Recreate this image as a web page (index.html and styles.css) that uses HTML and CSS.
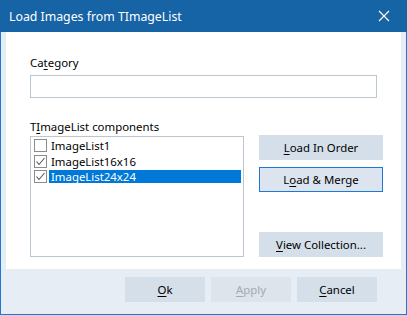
FILE: index.html
```html
<!DOCTYPE html>
<html>
<head>
<meta charset="utf-8">
<link rel="stylesheet" href="styles.css">
</head>
<body>
<div class="window">
  <div class="titlebar">
    <span class="title">Load Images from TImageList</span>
    <svg class="close" width="12" height="12" viewBox="0 0 12 12"><path d="M1 1 L11 11 M11 1 L1 11" stroke="#fff" stroke-width="1.2" fill="none"/></svg>
  </div>
  <div class="frame">
    <div class="panel">
      <div class="label lbl-cat">Ca<u>t</u>egory</div>
      <div class="input"></div>
      <div class="label lbl-list">T<u>I</u>mageList components</div>
      <div class="row">
        <div class="listbox">
          <div class="item"><span class="cb"></span><span class="txt">ImageList1</span></div>
          <div class="item"><span class="cb checked"><svg width="11" height="11" viewBox="0 0 11 11"><path d="M1.5 5.5 L4 8.5 L9.5 2" stroke="#555" stroke-width="1.1" fill="none"/></svg></span><span class="txt">ImageList16x16</span></div>
          <div class="item sel"><span class="cb checked"><svg width="11" height="11" viewBox="0 0 11 11"><path d="M1.5 5.5 L4 8.5 L9.5 2" stroke="#555" stroke-width="1.1" fill="none"/></svg></span><span class="txt">ImageList24x24</span></div>
        </div>
        <div class="side">
          <div class="btn"><u>L</u>oad In Order</div>
          <div class="btn focus">L<u>o</u>ad &amp; Merge</div>
          <div class="spacer"></div>
          <div class="btn"><u>V</u>iew Collection...</div>
        </div>
      </div>
    </div>
    <div class="footer">
      <div class="btn fbtn"><u>O</u>k</div>
      <div class="btn fbtn disabled"><u>A</u>pply</div>
      <div class="btn fbtn"><u>C</u>ancel</div>
    </div>
  </div>
</div>
</body>
</html>
```
FILE: styles.css
```css
* { box-sizing: border-box; }
html, body { margin: 0; padding: 0; }
body {
  font-family: "Noto Sans", "Open Sans", sans-serif;
  font-size: 11.4px;
  color: #000;
  background: #fff;
}
u { text-decoration: underline; text-underline-offset: 2px; text-decoration-thickness: 1px; }
.window {
  width: 407px;
  height: 315px;
  display: flex;
  flex-direction: column;
}
.titlebar {
  height: 32px;
  background: #1663a5;
  color: #fff;
  display: flex;
  align-items: center;
  padding-left: 9px;
  padding-right: 17px;
  flex: none;
}
.title { flex: 1; font-size: 12.3px; }
.close { display: block; }
.frame {
  flex: 1;
  border: 1px solid #1c7ad6;
  border-top: 0;
  background: #e6edf5;
  padding: 0 5px;
  display: flex;
  flex-direction: column;
}
.panel {
  background: #fff;
  height: 237px;
  padding: 23px 17px 0 24px;
  display: flex;
  flex-direction: column;
}
.label { line-height: 16px; height: 16px; }
.lbl-cat { margin-bottom: 4px; }
.input {
  width: 347px;
  height: 23px;
  border: 1px solid #bbc7d0;
  background: #fff;
}
.lbl-list { margin-top: 21px; margin-bottom: 0; }
.row {
  display: flex;
  gap: 15px;
  align-items: flex-start;
}
.listbox {
  margin-top: 1px;
  width: 214px;
  height: 121px;
  border: 1px solid #bbc7d0;
  padding: 1px 2px 0 3px;
  flex: none;
}
.item {
  height: 15.5px;
  display: flex;
  align-items: center;
}
.cb {
  width: 13px;
  height: 13px;
  border: 1px solid #8c8c8c;
  background: #fff;
  margin-right: 2px;
  display: flex;
  align-items: center;
  justify-content: center;
  flex: none;
}
.txt {
  padding-left: 2px;
  line-height: 13px;
  height: 13px;
  flex: 1;
}
.sel .txt { background: #0078d7; color: #fff; }
.side {
  width: 124px;
  height: 122px;
  display: flex;
  flex-direction: column;
  gap: 7px;
  flex: none;
}
.spacer { flex: 1; }
.btn {
  height: 25px;
  background: #d4dfea;
  border: 1px solid #d4dfea;
  display: flex;
  align-items: center;
  justify-content: center;
  flex: none;
}
.btn.focus { background: #dce5ef; border-color: #1a7ad6; }
.footer {
  flex: 1;
  display: flex;
  justify-content: flex-end;
  gap: 6px;
  padding: 8px 24px 0 0;
}
.fbtn { width: 80px; }
.fbtn.disabled { background: #dde4ec; border-color: #dde4ec; color: #a3abb3; }
```
